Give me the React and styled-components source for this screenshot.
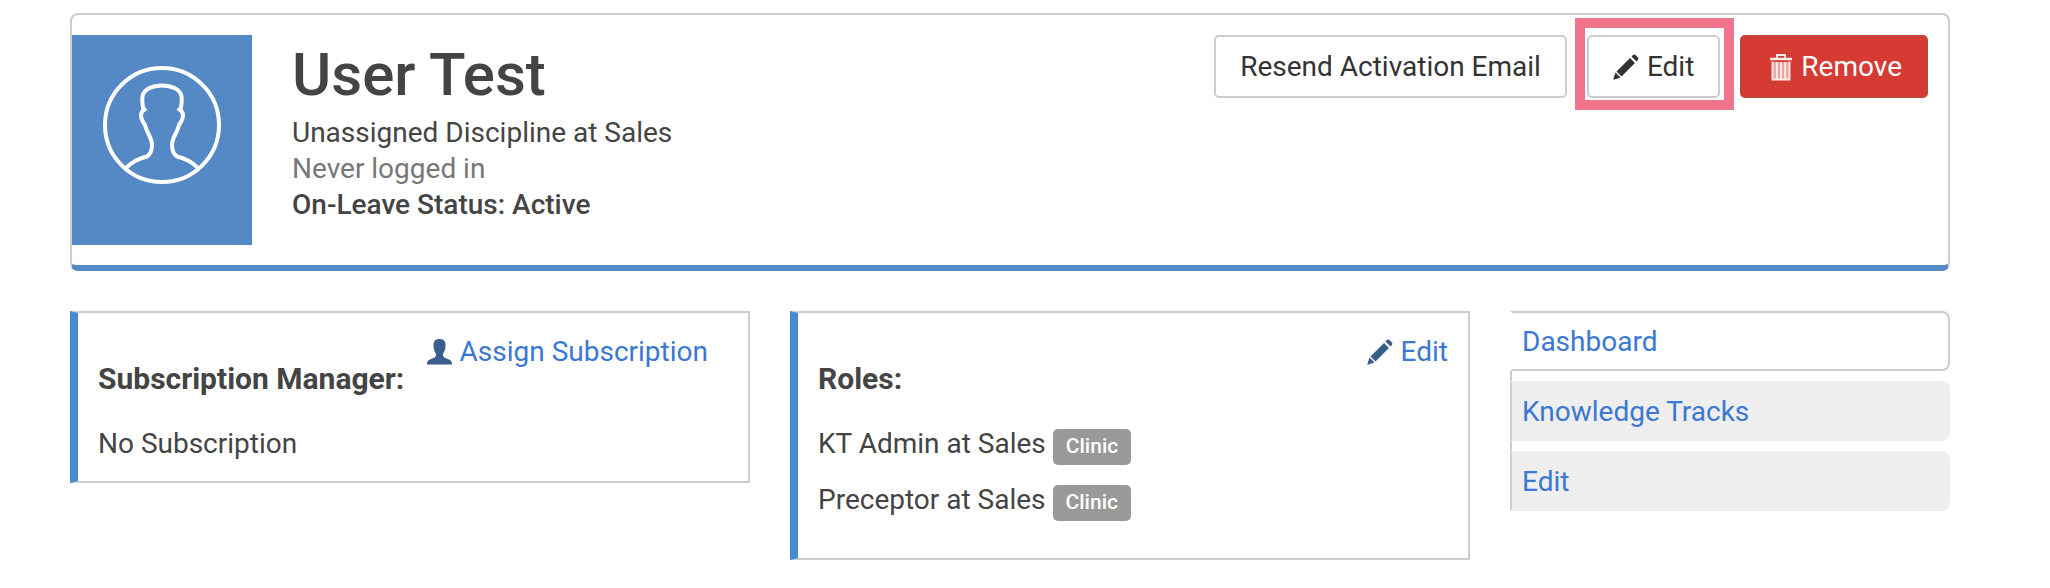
import React from 'react';
import styled, { createGlobalStyle } from 'styled-components';

const GlobalStyle = createGlobalStyle`
    * {
        box-sizing: border-box;
    }

    body {
        margin: 0;
        background: #fff;
        color: #444;
        font-family: Roboto, "Liberation Sans", sans-serif;
        font-size: 28px;
        line-height: 36px;
    }
`;

const Page = styled.main`
    padding: 13px 100px 28px 70px;
`;

const ProfileCard = styled.header`
    display: flex;
    align-items: flex-start;
    padding: 20px 20px 20px 0;
    border: 2px solid #ccc;
    border-bottom: 6px solid #5589c5;
    border-radius: 8px;
`;

const Avatar = styled.div`
    flex: none;
    width: 180px;
    height: 210px;
    background: #5589c5;
`;

const ProfileInfo = styled.div`
    flex: 1;
    padding: 6px 40px 0;
`;

const Name = styled.h1`
    margin: 0 0 6px;
    font-size: 60px;
    font-weight: 500;
    line-height: 68px;
`;

const InfoLine = styled.p`
    margin: 0;
    color: ${props => props.$muted ? '#777' : '#444'};
    font-weight: ${props => props.$strong ? 500 : 400};
`;

const Actions = styled.div`
    display: flex;
    gap: 20px;
`;

const Button = styled.button`
    display: flex;
    align-items: center;
    gap: 8px;
    height: 63px;
    padding: 0 24px;
    border: 2px solid ${props => props.$danger ? '#c5433c' : '#ccc'};
    border-radius: 5px;
    background: ${props => props.$danger ? '#d53b33' : '#fff'};
    color: ${props => props.$danger ? '#fff' : '#333'};
    font: inherit;
    white-space: nowrap;
    cursor: pointer;
`;

const Highlight = styled.div`
    position: relative;

    &::after {
        content: '';
        position: absolute;
        inset: -17px -14px -12px -12px;
        border: 10px solid #f0758a;
        pointer-events: none;
    }
`;

const Columns = styled.div`
    display: grid;
    grid-template-columns: 17fr 17fr 11fr;
    align-items: start;
    gap: 40px;
    margin-top: 40px;
`;

const Panel = styled.section`
    padding: 21px 20px ${props => props.$roomy ? 40 : 19}px;
    border: 2px solid #ccc;
    border-left: 8px solid #468ad3;
`;

const PanelHeader = styled.div`
    display: flex;
    justify-content: space-between;
    align-items: flex-start;
    padding-right: ${props => props.$inset ? 20 : 0}px;
`;

const PanelTitle = styled.h2`
    margin: 27px 0 0;
    font-size: 30px;
    font-weight: 700;
    line-height: 36px;
`;

const Link = styled.a`
    display: flex;
    align-items: center;
    gap: 8px;
    color: #3a78d3;
    text-decoration: none;

    svg {
        color: #3b5f8c;
    }
`;

const Row = styled.p`
    display: flex;
    align-items: flex-start;
    gap: 7px;
    margin: 20px 0 0;

    ${PanelHeader} + & {
        margin-top: 29px;
    }
`;

const Badge = styled.span`
    height: 36px;
    margin: 3px 0 -3px;
    padding: 0 13px;
    border-radius: 5px;
    background: #999;
    color: #fff;
    font-size: 21px;
    font-weight: 500;
    line-height: 34px;
`;

const Tabs = styled.nav`
    display: grid;
    gap: 10px;
    background: linear-gradient(#ccc, #ccc) left / 2px 100% no-repeat;
`;

const Tab = styled.a`
    display: block;
    height: 60px;
    padding: 11px 10px;
    border: 2px solid ${props => props.$active ? '#ccc' : '#eee'};
    border-left-color: ${props => props.$active ? '#fff' : '#ccc'};
    border-radius: 0 8px 8px 0;
    background: ${props => props.$active ? '#fff' : '#eee'};
    color: #3a78d3;
    text-decoration: none;
`;

const PersonOutline = () => (
    <svg width="180" height="210" viewBox="0 0 180 210" fill="none" stroke="#fff" strokeWidth="4" aria-hidden="true">
        <circle cx="90" cy="90" r="57" />
        <path d="M54 133C60 127 66 123.500 75 121.500C78.500 119 80 115 80 110C80 102 75 99 73 90C70 86 69 84 69 80C69 77 70 76 72.500 74.500L71 72.500C70.300 68 70 64 70.500 61C72 54.500 80 50.500 90 50.500S108 54.500 109.500 61C110 64 109.700 68 109 72.500L107.500 74.500C110 76 111 77 111 80C111 84 110 86 107 90C105 99 100 102 100 110C100 115 101.500 119 105 121.500C114 123.500 120 127 126 133" />
    </svg>
);

const PencilIcon = () => (
    <svg width="26" height="26" viewBox="0 0 26 26" fill="currentColor" aria-hidden="true">
        <path d="M18.500 2.500 20 1Q21.500 0 23 1.500l1.500 1.500Q26 4.500 25 6L23.500 7.500z" />
        <path d="M17 4 22 9 8.500 22.500 3.500 17.500z" />
        <path d="M2.500 18.500 7.500 23.500 1.500 25.500Q0 26 .5 24.500z" />
    </svg>
);

const TrashIcon = () => (
    <svg width="27" height="28" viewBox="-3 0 27 28" fill="none" stroke="#fbe9e8" aria-hidden="true">
        <path d="M8 5V2h8v3" strokeWidth="2" />
        <path d="M1 6h22" strokeWidth="2.500" />
        <path d="M3 9h18v18H3z" fill="#e9a29e" stroke="none" />
        <path d="M3.500 8.500v18h17v-18M7.800 9v17M12 9v17M16.200 9v17" strokeWidth="2" />
    </svg>
);

const PersonIcon = () => (
    <svg width="25" height="26" viewBox="0 0 25 26" fill="currentColor" aria-hidden="true">
        <path d="M12.500 0C8.500 0 6.500 2 6.500 6c0 1.500 0 3 .5 4.500.5 2 2 3.500 2 5.500 0 2.500-2.500 3-5 4C1.500 21 0 22 0 25.500h25c0-3.500-1.500-4.500-4-5.500-2.500-1-5-1.500-5-4 0-2 1.500-3.500 2-5.500.5-1.500.5-3 .5-4.500 0-4-2-6-6-6z" />
    </svg>
);

const roles = ['KT Admin at Sales', 'Preceptor at Sales'];
const tabs = ['Dashboard', 'Knowledge Tracks', 'Edit'];

class App extends React.Component {

    getRenderedRoles() {
        return roles.map(role => (
            <Row key={role}>
                <span>{role}</span>
                <Badge>Clinic</Badge>
            </Row>
        ));
    }

    getRenderedTabs() {
        return tabs.map((tab, i) => (
            <Tab key={tab} href="#" $active={i === 0}>{tab}</Tab>
        ));
    }

    render() {
        return (
            <Page>
                <GlobalStyle />
                <ProfileCard>
                    <Avatar><PersonOutline /></Avatar>
                    <ProfileInfo>
                        <Name>User Test</Name>
                        <InfoLine>Unassigned Discipline at Sales</InfoLine>
                        <InfoLine $muted>Never logged in</InfoLine>
                        <InfoLine $strong>On-Leave Status: Active</InfoLine>
                    </ProfileInfo>
                    <Actions>
                        <Button type="button">Resend Activation Email</Button>
                        <Highlight>
                            <Button type="button"><PencilIcon />Edit</Button>
                        </Highlight>
                        <Button type="button" $danger><TrashIcon />Remove</Button>
                    </Actions>
                </ProfileCard>
                <Columns>
                    <Panel>
                        <PanelHeader $inset>
                            <PanelTitle>Subscription Manager:</PanelTitle>
                            <Link href="#"><PersonIcon />Assign Subscription</Link>
                        </PanelHeader>
                        <Row>No Subscription</Row>
                    </Panel>
                    <Panel $roomy>
                        <PanelHeader>
                            <PanelTitle>Roles:</PanelTitle>
                            <Link href="#"><PencilIcon />Edit</Link>
                        </PanelHeader>
                        {this.getRenderedRoles()}
                    </Panel>
                    <Tabs>{this.getRenderedTabs()}</Tabs>
                </Columns>
            </Page>
        );
    }

}

export default App;
